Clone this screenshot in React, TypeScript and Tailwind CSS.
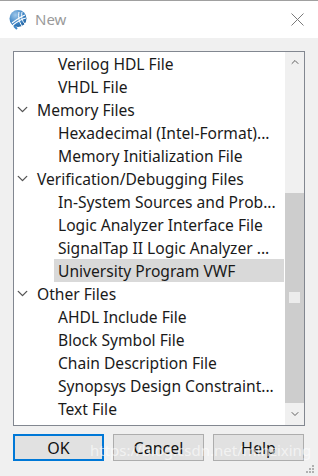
import { ChevronDown, ChevronUp } from "lucide-react";

type Row = { label: string; level: 0 | 1; selected?: boolean };

const rows: Row[] = [
  { label: "Verilog HDL File", level: 1 },
  { label: "VHDL File", level: 1 },
  { label: "Memory Files", level: 0 },
  { label: "Hexadecimal (Intel-Format)...", level: 1 },
  { label: "Memory Initialization File", level: 1 },
  { label: "Verification/Debugging Files", level: 0 },
  { label: "In-System Sources and Prob...", level: 1 },
  { label: "Logic Analyzer Interface File", level: 1 },
  { label: "SignalTap II Logic Analyzer ...", level: 1 },
  { label: "University Program VWF", level: 1, selected: true },
  { label: "Other Files", level: 0 },
  { label: "AHDL Include File", level: 1 },
  { label: "Block Symbol File", level: 1 },
  { label: "Chain Description File", level: 1 },
  { label: "Synopsys Design Constraint...", level: 1 },
  { label: "Text File", level: 1 },
];

function AppIcon() {
  return (
    <svg width="20" height="21" viewBox="0 0 20 21">
      <defs>
        <radialGradient id="g" cx="0.35" cy="0.3" r="0.8">
          <stop offset="0" stopColor="#9fc7ea" />
          <stop offset="0.6" stopColor="#3f86c6" />
          <stop offset="1" stopColor="#1d5c99" />
        </radialGradient>
      </defs>
      <circle cx="10" cy="9.5" r="8.5" fill="url(#g)" />
      <path d="M4 14 C8 11 12 8 17 6" stroke="#fff" strokeWidth="1.2" fill="none" />
      <path d="M5 16 C9 13 13 10 18 9" stroke="#fff" strokeWidth="1.2" fill="none" />
      <path d="M11 3 C10 8 11 13 14 17" stroke="#fff" strokeWidth="1" fill="none" />
      <path d="M14 3 C13 8 14 12 17 15" stroke="#fff" strokeWidth="1" fill="none" />
      <path d="M6 17 L9 20" stroke="#3f86c6" strokeWidth="2" />
    </svg>
  );
}

function TreeRow({ row }: { row: Row }) {
  if (row.level === 0) {
    return (
      <div className="flex h-[23px] items-center">
        <div className="flex w-[17px] justify-center">
          <ChevronDown size={17} strokeWidth={1.9} className="text-[#555]" />
        </div>
        <span className="ml-[6px] whitespace-nowrap pt-[2px]">{row.label}</span>
      </div>
    );
  }
  return (
    <div className="flex h-[23px] items-center">
      <div
        className={
          "ml-[40px] flex h-[23px] w-[230px] items-center pl-[4px] " +
          (row.selected ? "bg-[#d9d9d9]" : "")
        }
      >
        <span className="whitespace-nowrap pt-[2px]">{row.label}</span>
      </div>
    </div>
  );
}

function DlgButton({ label, focused }: { label: string; focused?: boolean }) {
  return (
    <button
      className={
        "flex h-[27px] w-[91px] items-center justify-center bg-[#e1e1e1] text-[16px] text-[#111] " +
        (focused ? "border-2 border-[#0078d7]" : "border border-[#adadad]")
      }
    >
      {label}
    </button>
  );
}

export default function App() {
  return (
    <div
      className="relative h-[476px] w-[318px] overflow-hidden border-t border-[#a0a0a0] bg-[#f0f0f0] text-[#1a1a1a]"
      style={{ fontFamily: '"Noto Sans", "Open Sans", sans-serif' }}
    >
      {/* title bar */}
      <div className="flex h-[37px] items-center bg-white pl-[8px] pr-[14px]">
        <AppIcon />
        <span className="ml-[7px] text-[15px] text-[#9a9a9a]">New</span>
        <svg className="ml-auto" width="13" height="13" viewBox="0 0 13 13">
          <path d="M0.5 0.5 L12.5 12.5 M12.5 0.5 L0.5 12.5" stroke="#7a7a7a" strokeWidth="1" />
        </svg>
      </div>

      <div className="px-[13px] pt-[13px]">
        {/* tree list */}
        <div className="flex h-[375px] border border-[#828790] bg-white">
          <div className="flex-1 overflow-hidden text-[15.6px] leading-none">
            {rows.map((r) => (
              <TreeRow key={r.label} row={r} />
            ))}
          </div>
          <div className="flex w-[19px] flex-col bg-[#f0f0f0]">
            <div className="flex h-[18px] items-center justify-center pt-[2px]">
              <ChevronUp size={12} strokeWidth={2} className="text-[#606060]" />
            </div>
            <div className="h-[123px]" />
            <div className="relative h-[210px] bg-[#cdcdcd]">
              <div className="absolute left-[4px] top-[99px] h-[11px] w-[11px] bg-[#ececec]" />
            </div>
            <div className="flex flex-1 items-center justify-center">
              <ChevronDown size={12} strokeWidth={2} className="text-[#606060]" />
            </div>
          </div>
        </div>

        {/* buttons */}
        <div className="mt-[8px] flex gap-[9px]">
          <DlgButton label="OK" focused />
          <DlgButton label="Cancel" />
          <DlgButton label="Help" />
        </div>
      </div>

      {/* watermark */}
      <div className="pointer-events-none absolute left-[90px] top-[438px] whitespace-nowrap text-[15px] text-white/60">
        https://blog.csdn.net/minzixing
      </div>

      {/* resize grip */}
      <svg className="absolute bottom-[2px] right-[3px]" width="10" height="10" viewBox="0 0 10 10">
        {[
          [8, 2],
          [8, 5],
          [5, 5],
          [8, 8],
          [5, 8],
          [2, 8],
        ].map(([x, y]) => (
          <rect key={`${x}-${y}`} x={x - 1} y={y - 1} width="2" height="2" fill="#b0b0b0" />
        ))}
      </svg>
    </div>
  );
}
